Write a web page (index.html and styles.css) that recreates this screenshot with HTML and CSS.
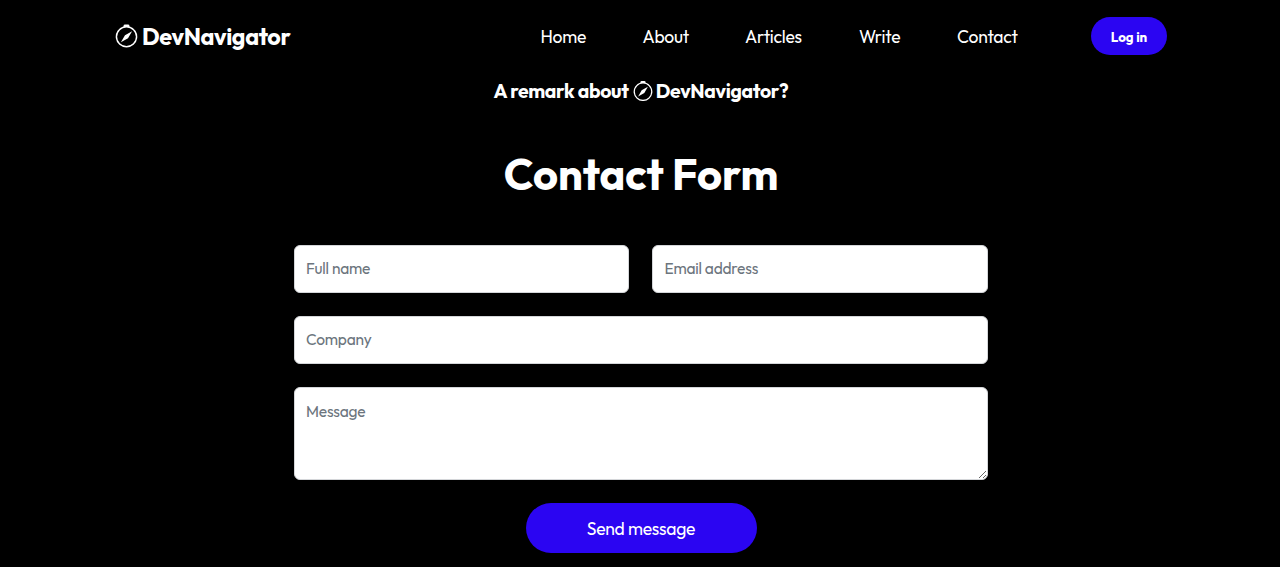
FILE: index.html
```html
<!DOCTYPE html>
<html lang="en">
<head>
<meta charset="utf-8">
<title>DevNavigator - Contact</title>
<link rel="stylesheet" href="styles.css">
</head>
<body>
<svg class="sprite" aria-hidden="true">
  <symbol id="compass" viewBox="0 0 16 16">
    <path d="M8 16.016a7.5 7.5 0 0 0 1.962-14.74A1 1 0 0 0 9 0H7a1 1 0 0 0-.962 1.276A7.5 7.5 0 0 0 8 16.016zm6.5-7.5a6.5 6.5 0 1 1-13 0 6.5 6.5 0 0 1 13 0z"/>
    <path d="m6.94 7.44 4.95-2.83-2.83 4.95-4.949 2.83 2.828-4.95z"/>
  </symbol>
</svg>
<header class="navbar">
  <a class="brand" href="#"><svg class="brand-icon"><use href="#compass"/></svg><span class="brand-name">DevNavigator</span></a>
  <nav class="links">
    <a class="link home" href="#">Home</a>
    <a class="link about" href="#">About</a>
    <a class="link articles" href="#">Articles</a>
    <a class="link write" href="#">Write</a>
    <a class="link contact" href="#">Contact</a>
  </nav>
  <button class="login">Log in</button>
</header>
<main class="page">
  <p class="remark"><span class="remark-lead">A remark about</span><svg class="remark-icon"><use href="#compass"/></svg><span class="remark-name">DevNavigator?</span></p>
  <h1 class="title">Contact Form</h1>
  <form class="form">
    <div class="row">
      <input class="field full-name" placeholder="Full name">
      <input class="field email" placeholder="Email address">
    </div>
    <input class="field company" placeholder="Company">
    <textarea class="field message" placeholder="Message"></textarea>
    <button class="send" type="button">Send message</button>
  </form>
</main>
</body>
</html>
```
FILE: styles.css
```css
* { box-sizing: border-box; }
body {
  margin: 0;
  height: 567px;
  overflow: hidden;
  background: #000;
  color: #fff;
  font-family: Outfit, Lato, sans-serif;
}
.sprite { display: none; }
svg { fill: #fff; flex: none; }
a { color: inherit; text-decoration: none; }
button, input, textarea { font-family: inherit; }
.navbar {
  display: flex;
  align-items: center;
  height: 72px;
  padding-left: 115px;
}
.brand { display: flex; align-items: center; width: 425.5px; }
.brand-icon { width: 23px; height: 24px; margin-right: 4px; }
.brand-name { padding-top: 2px; font-size: 23.4px; font-weight: 700; letter-spacing: -0.4px; line-height: 30px; white-space: nowrap; }
.links { display: flex; gap: 56px; padding-top: 2px; font-size: 17.5px; letter-spacing: -0.25px; line-height: 24px; }
.link { white-space: nowrap; }
.home { width: 46px; }
.about { width: 46.5px; }
.articles { width: 58px; }
.write { width: 42px; }
.contact { width: 60px; }
.login {
  width: 76px;
  height: 38px;
  margin-left: 74px;
  padding: 1px 0 0;
  border: 0;
  border-radius: 19px;
  background: #2b05f2;
  color: #fff;
  font-size: 13.33px;
  font-weight: 700;
}
.page { display: flex; flex-direction: column; align-items: center; padding-left: 2px; }
.remark {
  display: flex;
  align-items: center;
  height: 26px;
  margin: 6px 0 0;
  font-size: 19.4px;
  font-weight: 700;
  letter-spacing: -0.3px;
  line-height: 26px;
  white-space: nowrap;
}
.remark-icon { width: 20px; height: 20px; margin: 0 3px 0 4px; }
.title { margin: 42px 0 43px; font-size: 43.4px; font-weight: 700; line-height: 56px; }
.form { display: flex; flex-direction: column; align-items: center; gap: 23px; width: 694px; margin-right: 1px; }
.row { display: flex; gap: 23px; width: 100%; }
.field {
  display: block;
  width: 100%;
  height: 48px;
  padding: 0 11.5px 2px;
  border: 1px solid #d4d6d9;
  border-radius: 6px;
  background: #fff;
  font-size: 15.5px;
  letter-spacing: -0.2px;
  line-height: 23px;
}
.field::placeholder { color: #6c757d; opacity: 1; }
.message { height: 93px; padding: 12px 11.5px; }
.send {
  width: 231px;
  height: 50px;
  margin-left: 1px;
  padding: 0;
  border: 0;
  border-radius: 25px;
  background: #2b05f2;
  color: #fff;
  font-size: 17.5px;
  letter-spacing: -0.25px;
}
```
